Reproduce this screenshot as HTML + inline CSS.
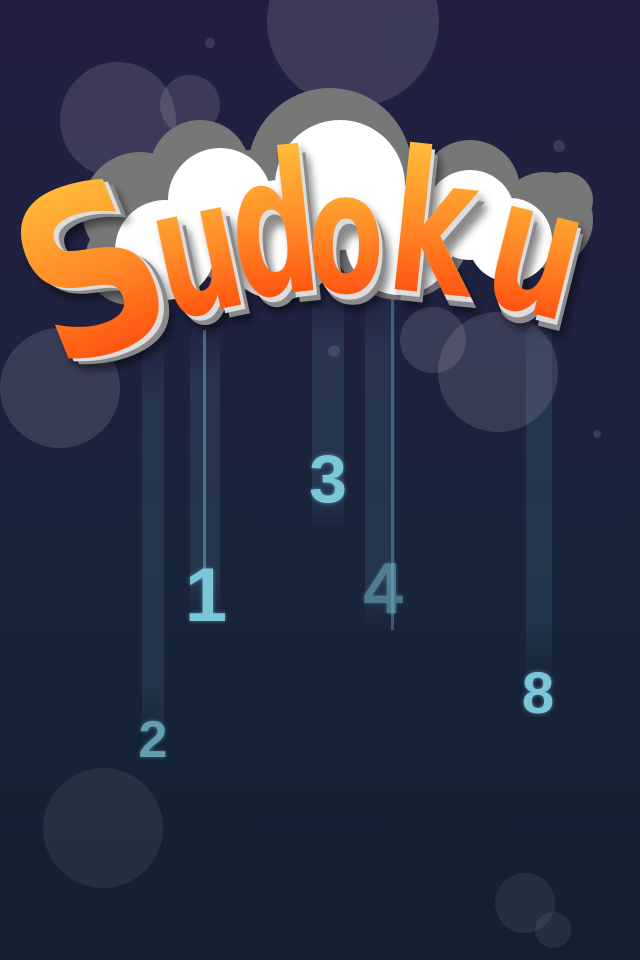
<!DOCTYPE html>
<html><head><meta charset="utf-8"><style>
html,body{margin:0;padding:0;}
body{width:640px;height:960px;overflow:hidden;position:relative;background:linear-gradient(#221e42 0%,#1f2140 30%,#18243a 60%,#132030 100%);font-family:"Liberation Sans",sans-serif;}
.b{position:absolute;border-radius:50%;background:rgba(255,255,255,0.12);}
.s{position:absolute;background:linear-gradient(rgba(120,180,210,0),rgba(120,180,210,0.12) 20%,rgba(120,180,210,0.12) 85%,rgba(120,180,210,0));}
.n{position:absolute;color:#7cc6da;font-weight:bold;text-align:center;transform:translateX(-50%);text-shadow:0 0 4px rgba(120,200,230,.6);}
</style></head><body>
<div class="b" style="left:267px;top:-65px;width:172px;height:172px"></div>
<div class="b" style="left:60px;top:62px;width:116px;height:116px"></div>
<div class="b" style="left:160px;top:75px;width:60px;height:60px"></div>
<div class="b" style="left:0;top:328px;width:120px;height:120px"></div>
<div class="b" style="left:400px;top:307px;width:66px;height:66px"></div>
<div class="b" style="left:438px;top:312px;width:120px;height:120px"></div>
<div class="b" style="left:43px;top:768px;width:120px;height:120px;background:rgba(255,255,255,0.07)"></div>
<div class="b" style="left:495px;top:873px;width:60px;height:60px;background:rgba(255,255,255,0.07)"></div>
<div class="b" style="left:535px;top:912px;width:36px;height:36px;background:rgba(255,255,255,0.07)"></div>
<div class="b" style="left:205px;top:38px;width:10px;height:10px"></div>
<div class="b" style="left:553px;top:140px;width:12px;height:12px"></div>
<div class="b" style="left:328px;top:345px;width:12px;height:12px"></div>
<div class="b" style="left:593px;top:430px;width:8px;height:8px"></div>

<div class="s" style="left:142px;top:320px;width:22px;height:430px"></div>
<div class="s" style="left:190px;top:320px;width:30px;height:300px"></div>
<div style="position:absolute;left:203px;top:330px;width:3px;height:270px;background:rgba(120,190,220,.45)"></div>
<div class="s" style="left:312px;top:290px;width:32px;height:240px"></div>
<div class="s" style="left:365px;top:280px;width:30px;height:350px"></div>
<div style="position:absolute;left:391px;top:290px;width:3px;height:340px;background:rgba(120,190,220,.35)"></div>
<div class="s" style="left:526px;top:290px;width:26px;height:390px"></div>

<div class="n" style="left:153px;top:710px;font-size:52px;opacity:.75">2</div>
<div class="n" style="left:206px;top:552px;font-size:76px">1</div>
<div class="n" style="left:328px;top:440px;font-size:68px">3</div>
<div class="n" style="left:383px;top:548px;font-size:72px;opacity:.5">4</div>
<div class="n" style="left:538px;top:660px;font-size:58px">8</div>

<svg width="640" height="960" style="position:absolute;left:0;top:0">
<defs><linearGradient id="g" x1="0" y1="0" x2="0" y2="1"><stop offset="0" stop-color="#ffd040"/><stop offset=".5" stop-color="#ff8a28"/><stop offset="1" stop-color="#ff3300"/></linearGradient>
<filter id="sh"><feDropShadow dx="4" dy="6" stdDeviation="4" flood-color="#000" flood-opacity=".45"/></filter></defs>
<g fill="#777">
<circle cx="330" cy="170" r="82"/><circle cx="200" cy="170" r="50"/><circle cx="140" cy="210" r="58"/><circle cx="250" cy="220" r="70"/>
<circle cx="470" cy="190" r="50"/><circle cx="545" cy="220" r="48"/><circle cx="565" cy="200" r="28"/><circle cx="400" cy="230" r="70"/><circle cx="130" cy="260" r="45"/>
</g>
<g fill="#fff">
<circle cx="340" cy="185" r="65"/><circle cx="220" cy="200" r="52"/><circle cx="165" cy="250" r="50"/><circle cx="280" cy="240" r="60"/>
<circle cx="470" cy="215" r="45"/><circle cx="510" cy="240" r="42"/><circle cx="400" cy="240" r="55"/>
</g>
<g font-family="DejaVu Sans,sans-serif" font-weight="bold" filter="url(#sh)">
<g transform="translate(58,372) rotate(-22) scale(0.95,1.15)">
<text font-size="200" fill="#8a8a8a" x="8" y="8">S</text><text font-size="200" fill="#ddd" x="4" y="4">S</text><text font-size="200" fill="url(#g)">S</text></g>
<g transform="translate(168,320) rotate(-12) scale(0.85,1.3)">
<text font-size="140" fill="#8a8a8a" x="8" y="8">u</text><text font-size="140" fill="#ddd" x="4" y="4">u</text><text font-size="140" fill="url(#g)">u</text></g>
<g transform="translate(238,298) rotate(-6) scale(0.8,1.3)">
<text font-size="150" fill="#8a8a8a" x="8" y="8">d</text><text font-size="150" fill="#ddd" x="4" y="4">d</text><text font-size="150" fill="url(#g)">d</text></g>
<g transform="translate(308,292) scale(0.85,1.3)">
<text font-size="130" fill="#8a8a8a" x="8" y="8">o</text><text font-size="130" fill="#ddd" x="4" y="4">o</text><text font-size="130" fill="url(#g)">o</text></g>
<g transform="translate(384,288) rotate(6) scale(0.85,1.3)">
<text font-size="150" fill="#8a8a8a" x="8" y="8">k</text><text font-size="150" fill="#ddd" x="4" y="4">k</text><text font-size="150" fill="url(#g)">k</text></g>
<g transform="translate(478,300) rotate(14) scale(0.9,1.3)">
<text font-size="140" fill="#8a8a8a" x="8" y="8">u</text><text font-size="140" fill="#ddd" x="4" y="4">u</text><text font-size="140" fill="url(#g)">u</text></g>
</g>
</svg>
</body></html>
